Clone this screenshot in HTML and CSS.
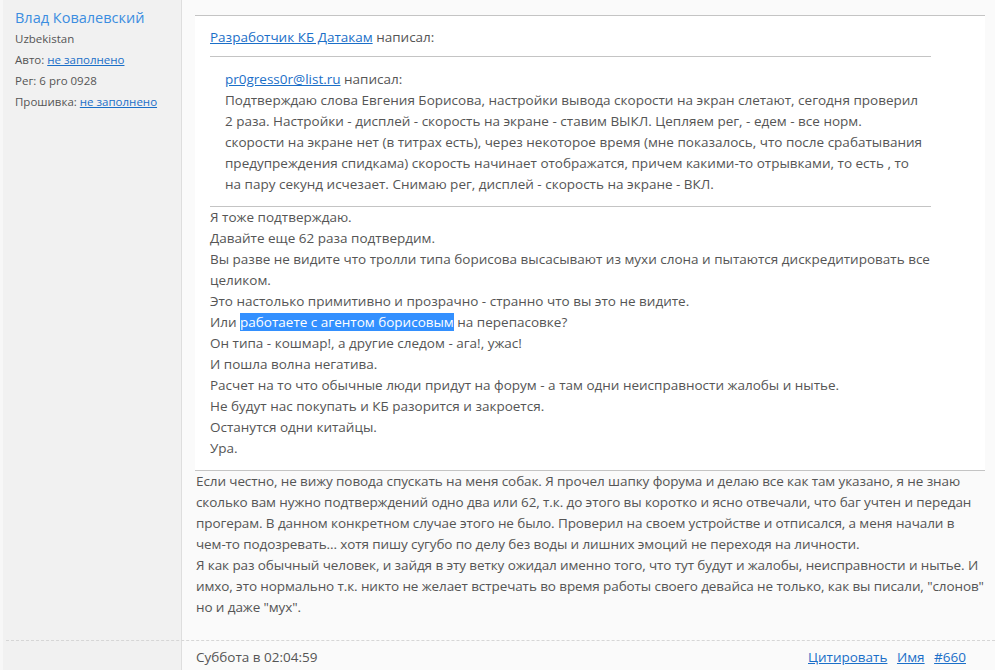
FILE: index.html
```html
<!DOCTYPE html>
<html>
<head>
    <title>Форум - сообщение #660</title>
    <link rel="stylesheet" href="styles.css">
</head>
<body>
    <div class="post">
        <div class="author">
            <a class="author-name" href="#">Влад Ковалевский</a>
            <div class="author-info">Uzbekistan</div>
            <div class="author-info">Авто: <a href="#">не заполнено</a></div>
            <div class="author-info">Рег: 6 pro 0928</div>
            <div class="author-info">Прошивка: <a href="#">не заполнено</a></div>
        </div>

        <div class="post-body">
            <div class="quote">
                <div class="quote-title"><a href="#">Разработчик КБ Датакам</a> написал:</div>
                <div class="quote quote-inner">
                    <div class="quote-title"><a href="#">pr0gress0r@list.ru</a> написал:</div>
                    Подтверждаю слова Евгения Борисова, настройки вывода скорости на экран слетают, сегодня проверил 2 раза. Настройки - дисплей - скорость на экране - ставим ВЫКЛ. Цепляем рег, - едем - все норм. скорости на экране нет (в титрах есть), через некоторое время (мне показалось, что после срабатывания предупреждения спидкама) скорость начинает отображатся, причем какими-то отрывками, то есть , то на пару секунд исчезает. Снимаю рег, дисплей - скорость на экране - ВКЛ.
                </div>
                Я тоже подтверждаю.<br>
                Давайте еще 62 раза подтвердим.<br>
                Вы разве не видите что тролли типа борисова высасывают из мухи слона и пытаются дискредитировать все целиком.<br>
                Это настолько примитивно и прозрачно - странно что вы это не видите.<br>
                Или <span class="selected">работаете с агентом борисовым</span> на перепасовке?<br>
                Он типа - кошмар!, а другие следом - ага!, ужас!<br>
                И пошла волна негатива.<br>
                Расчет на то что обычные люди придут на форум - а там одни неисправности жалобы и нытье.<br>
                Не будут нас покупать и КБ разорится и закроется.<br>
                Останутся одни китайцы.<br>
                Ура.
            </div>
            <div class="post-text">
                Если честно, не вижу повода спускать на меня собак. Я прочел шапку форума и делаю все как там указано, я не знаю сколько вам нужно подтверждений одно два или 62, т.к. до этого вы коротко и ясно отвечали, что баг учтен и передан прогерам. В данном конкретном случае этого не было. Проверил на своем устройстве и отписался, а меня начали в <span class="nobr">чем-то</span> подозревать... хотя пишу сугубо по делу без воды и лишних эмоций не переходя на личности.<br>
                Я как раз обычный человек, и зайдя в эту ветку ожидал именно того, что тут будут и жалобы, неисправности и нытье. И имхо, это нормально т.к. никто не желает встречать во время работы своего девайса не только, как вы писали, "слонов" но и даже "мух".
            </div>
        </div>

        <div class="post-footer">
            <div class="footer-side"></div>
            <div class="footer-main">
                <span>Суббота в 02:04:59</span>
                <div class="footer-links">
                    <a href="#">Цитировать</a>
                    <a href="#">Имя</a>
                    <a href="#">#660</a>
                </div>
            </div>
        </div>
    </div>
</body>
</html>
```

FILE: styles.css
```css
body {
    margin: 0;
    font-family: 'Open Sans', 'Noto Sans', sans-serif;
    font-size: 13.5px;
    line-height: 21px;
    color: #555;
    background-color: #fafafa;
}
a {
    color: #1b6fc8;
}
.post {
    display: grid;
    grid-template-columns: 182px 1fr;
    min-height: 670px;
}
.author {
    background-color: #f1f1f1;
    border-left: 3px solid #f7f7f7;
    border-right: 1px solid #dedede;
    padding: 7px 0 0 12px;
}
.author-name {
    display: block;
    font-size: 14.5px;
    line-height: 21px;
    color: #3b8de0;
    text-decoration: none;
}
.author-info {
    font-size: 11.5px;
    color: #555;
}
.post-body {
    padding: 15px 1px 22px 14px;
}
.quote {
    background-color: #fff;
    border-top: 1px solid #c4c4c4;
    border-bottom: 1px solid #c4c4c4;
    padding: 11px 16px 11px 15px;
    margin-left: -1px;
    margin-right: 9px;
}
.quote > .quote-title {
    margin-bottom: 8px;
}
.quote-inner {
    margin: 0 38px 0 0;
    padding: 12px 8px 11px 15px;
}
.quote-inner > .quote-title {
    margin-bottom: 0;
}
.selected {
    background-color: #3390ff;
    color: #fff;
}
.nobr {
    white-space: nowrap;
}
.post-text {
    letter-spacing: -0.1px;
}
.post-footer {
    grid-column: 1 / 3;
    display: grid;
    grid-template-columns: 182px 1fr;
    position: relative;
}
.post-footer::before {
    content: "";
    position: absolute;
    left: 6px;
    right: 0;
    top: 0;
    border-top: 1px dashed #d6d6d6;
}
.footer-side {
    background-color: #f1f1f1;
    border-left: 3px solid #f7f7f7;
    border-right: 1px solid #dedede;
}
.footer-main {
    display: flex;
    justify-content: space-between;
    padding: 7px 29px 7px 14px;
}
.footer-links a {
    margin-left: 6px;
}
```
